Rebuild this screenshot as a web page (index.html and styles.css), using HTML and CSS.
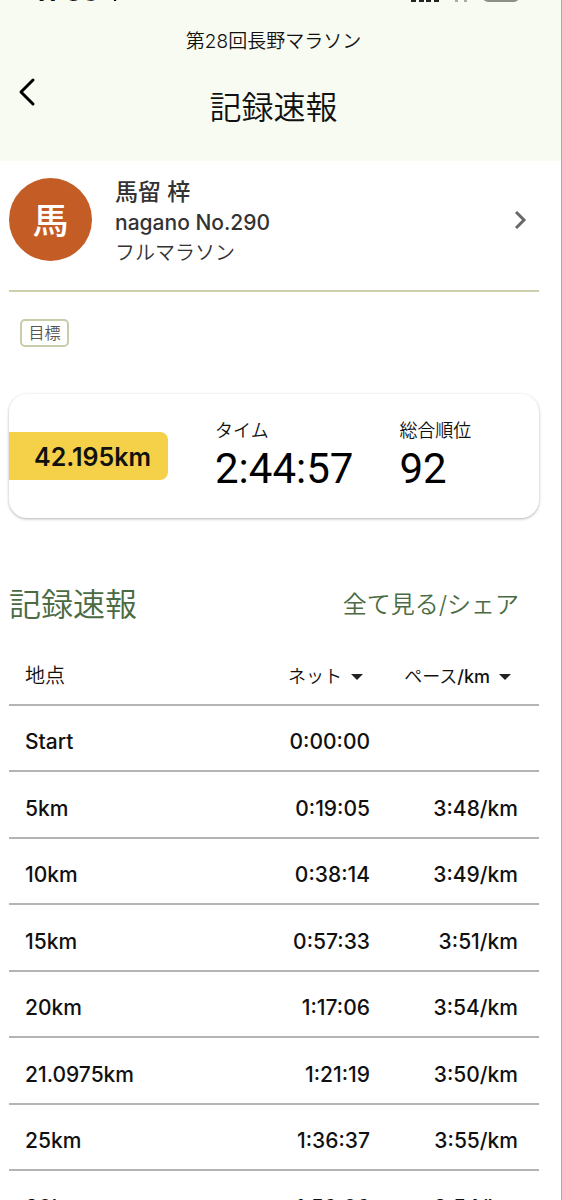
FILE: index.html
```
<!DOCTYPE html>
<html lang="ja">
<head>
  <meta charset="UTF-8">
  <meta name="viewport" content="width=device-width, initial-scale=1">
  <title>記録速報</title>
  <link rel="stylesheet" href="styles.css">
</head>
<body>

<div class="app">
  <header class="header">
    <div class="status">
      <div class="clock">
        <span>11:36</span>
        <svg width="18" height="18" viewBox="0 0 18 18"><path d="M17 0L11 17H9L8 10L0 8Z" fill="#000"/></svg>
      </div>
      <div class="signals">
        <svg width="28" height="16" viewBox="0 0 28 16"><path d="M0 11h5v5H0zM8 8h5v8H8zM15 4h5v12h-5zM23 0h5v16h-5z" fill="#222"/></svg>
        <svg width="20" height="16" viewBox="0 0 20 16"><path d="M1 5Q10 -3 19 5M4 10Q10 5 16 10M4 15h3M13 15h3" fill="none" stroke="#aaa" stroke-width="2"/></svg>
        <svg width="36" height="16" viewBox="0 0 36 16"><rect width="36" height="16" rx="5" fill="#8d8f89"/></svg>
      </div>
    </div>
    <p class="event">第28回長野マラソン</p>
    <div class="bar">
      <button type="button" class="back" aria-label="戻る">
        <svg width="18" height="30" viewBox="0 0 18 30"><path d="M15 3L3 15L15 27" fill="none" stroke="#000" stroke-width="3" stroke-linecap="round" stroke-linejoin="round"/></svg>
      </button>
      <h1>記録速報</h1>
    </div>
  </header>

  <main>
    <a href="#" class="runner">
      <span class="avatar">馬</span>
      <span class="profile">
        <strong>馬留 梓</strong>
        <span class="bib">nagano No.290</span>
        <span class="race">フルマラソン</span>
      </span>
      <svg width="12" height="18" viewBox="0 0 12 18"><path d="M1 1L9 9L1 17" fill="none" stroke="#686868" stroke-width="3"/></svg>
    </a>

    <button type="button" class="goal">目標</button>

    <section class="card">
      <span class="distance">42.195km</span>
      <dl>
        <div>
          <dt>タイム</dt>
          <dd>2:44:57</dd>
        </div>
        <div>
          <dt>総合順位</dt>
          <dd>92</dd>
        </div>
      </dl>
    </section>

    <div class="title">
      <h2>記録速報</h2>
      <a href="#">全て見る/シェア</a>
    </div>

    <table class="record">
      <thead>
        <tr>
          <th>地点</th>
          <th class="net"><button type="button">ネット</button></th>
          <th class="pace"><button type="button">ペース<span>/km</span></button></th>
        </tr>
      </thead>
      <tbody>
        <tr><td>Start</td><td>0:00:00</td><td></td></tr>
        <tr><td>5km</td><td>0:19:05</td><td>3:48/km</td></tr>
        <tr><td>10km</td><td>0:38:14</td><td>3:49/km</td></tr>
        <tr><td>15km</td><td>0:57:33</td><td>3:51/km</td></tr>
        <tr><td>20km</td><td>1:17:06</td><td>3:54/km</td></tr>
        <tr><td>21.0975km</td><td>1:21:19</td><td>3:50/km</td></tr>
        <tr><td>25km</td><td>1:36:37</td><td>3:55/km</td></tr>
        <tr><td>30km</td><td>1:56:06</td><td>3:54/km</td></tr>
      </tbody>
    </table>
  </main>
</div>

</body>
</html>
```

FILE: styles.css
```
* {
  margin: 0;
  padding: 0;
  box-sizing: border-box;
}

body {
  font-family: Inter, "Noto Sans CJK JP", sans-serif;
  color: #111;
  background-color: #fff;
}

a {
  color: inherit;
  text-decoration: none;
}

button {
  font: inherit;
  color: inherit;
  background: none;
  border: 0;
  cursor: pointer;
}

svg {
  display: block;
}

.app {
  height: 100vh;
  overflow: hidden;
  border-right: 1px solid #aaa;
}

.header {
  height: 161px;
  background-color: #f8fbf2;
}

/* ステータスバーは下端だけ見える */
.status {
  height: 2px;
  padding: 0 42px 0 34px;
  display: flex;
  justify-content: space-between;
  align-items: flex-end;
  overflow: hidden;
}

.clock,
.signals {
  display: flex;
  align-items: flex-end;
  gap: 12px;
}

.clock {
  gap: 6px;
  font-size: 26px;
  line-height: 20px;
  font-weight: 700;
}

.event {
  padding-top: 27px;
  padding-right: 14px;
  font-size: 19px;
  line-height: 26px;
  font-weight: 350;
  text-align: center;
}

.bar {
  display: grid;
  grid-template-columns: 60px 1fr 60px;
  padding-right: 14px;
  margin-top: 19px;
}

.back {
  width: 36px;
  height: 36px;
  padding-left: 18px;
}

.bar h1 {
  padding-top: 10px;
  font-size: 32px;
  line-height: 48px;
  font-weight: 350;
  text-align: center;
}

main {
  padding: 0 22px 0 9px;
}

.runner {
  display: flex;
  align-items: center;
  height: 131px;
  padding: 0 12px 12px 0;
  border-bottom: 2px solid #cdcfae;
  color: #333;
}

.avatar {
  width: 83px;
  height: 83px;
  border-radius: 50%;
  background-color: #c45c26;
  color: #fff;
  font-size: 36px;
  line-height: 86px;
  font-weight: 500;
  text-align: center;
}

.profile {
  flex: 1;
  padding: 4px 0 0 23px;
}

.profile strong,
.profile span {
  display: block;
  line-height: 30px;
}

.profile strong {
  font-size: 23px;
  font-weight: 500;
}

.profile .bib {
  font-size: 21px;
  line-height: 32px;
  font-weight: 450;
}

.profile .race {
  font-size: 20px;
  line-height: 28px;
  font-weight: 350;
}

.goal {
  display: block;
  margin: 27px 0 0 11px;
  width: 49px;
  height: 28px;
  border: 2px solid #c8cdaa;
  border-radius: 5px;
  color: #555;
  font-size: 16px;
  line-height: 24px;
  font-weight: 350;
}

.card {
  display: flex;
  align-items: center;
  height: 124px;
  margin-top: 47px;
  border-radius: 18px;
  box-shadow: 0 1px 3px rgba(0, 0, 0, .3);
}

.distance {
  width: 159px;
  height: 48px;
  padding-left: 25px;
  border-radius: 0 8px 8px 0;
  background-color: #f4d149;
  font-size: 25px;
  line-height: 50px;
  font-weight: 600;
}

.card dl {
  display: flex;
  gap: 46px;
  padding-left: 47px;
}

.card dt {
  font-size: 18px;
  line-height: 26px;
  font-weight: 350;
}

.card dd {
  font-family: Roboto, sans-serif;
  font-size: 42px;
  line-height: 50px;
  color: #000;
}

.title {
  display: flex;
  justify-content: space-between;
  align-items: center;
  margin-top: 63px;
  padding-right: 20px;
  color: #4a6b43;
}

.title h2 {
  font-size: 32px;
  line-height: 48px;
  font-weight: 350;
}

.title a {
  font-size: 24px;
  line-height: 48px;
  font-weight: 350;
}

.record {
  width: 100%;
  margin-top: 16px;
  border-collapse: separate;
  border-spacing: 0;
  table-layout: fixed;
}

.record th,
.record td {
  border-bottom: 2px solid #b4b4b4;
  text-align: right;
  white-space: nowrap;
}

.record th {
  height: 61px;
  padding-right: 7px;
  font-size: 18px;
  font-weight: 350;
}

.record .net {
  width: 180px;
}

.record .pace {
  width: 169px;
}

.pace span {
  font-weight: 500;
}

.record td {
  height: 66px;
  padding-top: 8px;
  font-size: 21px;
  line-height: 28px;
  font-weight: 450;
}

.record tr:nth-child(even) td {
  height: 67px;
}

.record th:first-child,
.record td:first-child {
  padding-left: 16px;
  text-align: left;
}

.record th:first-child {
  font-size: 20px;
}

.record th:last-child {
  padding-right: 28px;
}

.record td:last-child {
  padding-right: 21px;
}

.record button::after {
  content: "";
  display: inline-block;
  margin-left: 9px;
  vertical-align: 3px;
  border: 6px solid transparent;
  border-top-color: #222;
  border-bottom: 0;
}
```
